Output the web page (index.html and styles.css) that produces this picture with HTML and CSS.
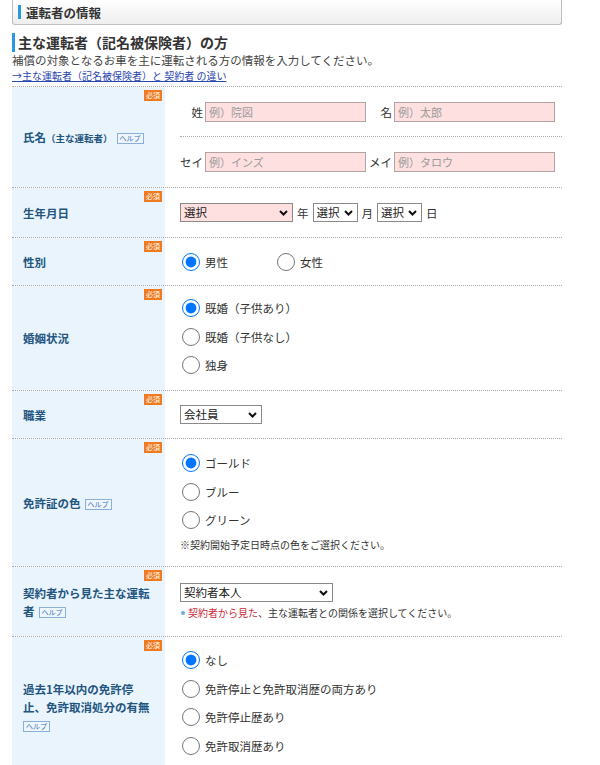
FILE: index.html
```html
<!DOCTYPE html>
<html lang="ja">
<head>
<meta charset="utf-8">
<title>運転者の情報</title>
<link rel="stylesheet" href="styles.css">
</head>
<body>
<div class="page">
  <div class="sec-head"><span class="sec-bar"></span>運転者の情報</div>
  <h2 class="sub-head">主な運転者（記名被保険者）の方</h2>
  <p class="desc">補償の対象となるお車を主に運転される方の情報を入力してください。</p>
  <a class="diff-link" href="#">→主な運転者（記名被保険者）と 契約者 の違い</a>

  <div class="form">
    <div class="row row-name">
      <div class="lbl"><div class="lt">氏名<span class="small">（主な運転者）</span><span class="help">ヘルプ</span></div><span class="req">必須</span></div>
      <div class="val val-name">
        <div class="name-line line-top">
          <span class="nl">姓</span><input class="txt" type="text" placeholder="例）院図">
          <span class="nl nl2">名</span><input class="txt" type="text" placeholder="例）太郎">
        </div>
        <div class="name-line">
          <span class="nl">セイ</span><input class="txt" type="text" placeholder="例）インズ">
          <span class="nl nl2">メイ</span><input class="txt" type="text" placeholder="例）タロウ">
        </div>
      </div>
    </div>

    <div class="row row-birth">
      <div class="lbl"><div class="lt">生年月日</div><span class="req">必須</span></div>
      <div class="val val-inline">
        <span class="sw"><select class="sel sel-year pink"><option>選択</option></select><svg class="chev" viewBox="0 0 9 6"><path d="M1 1L4.5 4.5L8 1"/></svg></span><span class="unit">年</span>
        <span class="sw"><select class="sel sel-md"><option>選択</option></select><svg class="chev" viewBox="0 0 9 6"><path d="M1 1L4.5 4.5L8 1"/></svg></span><span class="unit">月</span>
        <span class="sw"><select class="sel sel-md"><option>選択</option></select><svg class="chev" viewBox="0 0 9 6"><path d="M1 1L4.5 4.5L8 1"/></svg></span><span class="unit">日</span>
      </div>
    </div>

    <div class="row row-gender">
      <div class="lbl"><div class="lt">性別</div><span class="req">必須</span></div>
      <div class="val val-inline">
        <label class="opt opt-inline"><input type="radio" name="g" checked><span class="ot">男性</span></label>
        <label class="opt opt-inline"><input type="radio" name="g"><span class="ot">女性</span></label>
      </div>
    </div>

    <div class="row row-marital">
      <div class="lbl"><div class="lt">婚姻状況</div><span class="req">必須</span></div>
      <div class="val val-radios pt8">
        <label class="opt"><input type="radio" name="m" checked><span class="ot">既婚（子供あり）</span></label>
        <label class="opt"><input type="radio" name="m"><span class="ot">既婚（子供なし）</span></label>
        <label class="opt"><input type="radio" name="m"><span class="ot">独身</span></label>
      </div>
    </div>

    <div class="row row-job">
      <div class="lbl"><div class="lt">職業</div><span class="req">必須</span></div>
      <div class="val val-inline">
        <span class="sw"><select class="sel sel-job"><option>会社員</option></select><svg class="chev" viewBox="0 0 9 6"><path d="M1 1L4.5 4.5L8 1"/></svg></span>
      </div>
    </div>

    <div class="row row-license">
      <div class="lbl"><div class="lt">免許証の色<span class="help">ヘルプ</span></div><span class="req">必須</span></div>
      <div class="val val-radios pt10">
        <label class="opt"><input type="radio" name="c" checked><span class="ot">ゴールド</span></label>
        <label class="opt"><input type="radio" name="c"><span class="ot">ブルー</span></label>
        <label class="opt"><input type="radio" name="c"><span class="ot">グリーン</span></label>
        <p class="note">※契約開始予定日時点の色をご選択ください。</p>
      </div>
    </div>

    <div class="row row-rel">
      <div class="lbl"><div class="lt"><span>契約者から見た主な運転</span><span class="nw">者<span class="help">ヘルプ</span></span></div><span class="req">必須</span></div>
      <div class="val">
        <span class="sw"><select class="sel sel-rel"><option>契約者本人</option></select><svg class="chev" viewBox="0 0 9 6"><path d="M1 1L4.5 4.5L8 1"/></svg></span>
        <p class="rel-note"><span class="dot"></span><span class="red">契約者から見た</span>、主な運転者との関係を選択してください。</p>
      </div>
    </div>

    <div class="row row-past">
      <div class="lbl"><div class="lt">過去1年以内の免許停止、免許取消処分の有無<br><span class="help help-block">ヘルプ</span></div><span class="req">必須</span></div>
      <div class="val val-radios pt9">
        <label class="opt"><input type="radio" name="p" checked><span class="ot">なし</span></label>
        <label class="opt"><input type="radio" name="p"><span class="ot">免許停止と免許取消歴の両方あり</span></label>
        <label class="opt"><input type="radio" name="p"><span class="ot">免許停止歴あり</span></label>
        <label class="opt"><input type="radio" name="p"><span class="ot">免許取消歴あり</span></label>
      </div>
    </div>
  </div>
</div>
</body>
</html>
```

FILE: styles.css
```css
* { box-sizing: border-box; }
html, body { margin: 0; padding: 0; background: #fff; }
body {
  font-family: "Noto Sans CJK JP", "Noto Sans", sans-serif;
  color: #333;
}
.page {
  width: 562px;
  padding-left: 12px;
}
.sec-head {
  height: 25px;
  display: flex;
  align-items: center;
  border: 1px solid #bdbdbd;
  border-top: none;
  border-radius: 0 0 3px 3px;
  background: linear-gradient(#ffffff, #eeeeee);
  padding-left: 5px;
  font-size: 12.5px;
  font-weight: bold;
  color: #333;
}
.sec-bar {
  display: inline-block;
  width: 3px;
  height: 14px;
  background: #2a98dc;
  margin-right: 5px;
}
.sub-head {
  margin: 8px 0 0;
  height: 19px;
  line-height: 18px;
  font-size: 14px;
  font-weight: bold;
  color: #333;
  border-left: 3px solid #2a98dc;
  padding-left: 3px;
}
.desc {
  margin: 0;
  font-size: 11.5px;
  line-height: 16px;
  color: #444;
}
.diff-link {
  display: block;
  font-size: 10px;
  line-height: 15px;
  color: #2a46b0;
  text-decoration: underline;
}
.form {
  margin-top: 3px;
  border-top: 1px dotted #a8a8a8;
}
.row {
  display: flex;
  border-bottom: 1px dotted #a8a8a8;
}
.lbl {
  position: relative;
  width: 153px;
  flex: none;
  background: #eaf4fc;
  padding: 0 11px 0 11px;
  display: flex;
  align-items: center;
}
.lt {
  font-size: 11.5px;
  font-weight: bold;
  line-height: 18px;
  color: #22557f;
}
.nw { white-space: nowrap; }
.small { font-size: 9.5px; }
.help {
  display: inline-block;
  margin-left: 4px;
  padding: 0 2px;
  border: 1px solid #8ab0d8;
  background: #eef5fc;
  color: #3c74b8;
  font-size: 7px;
  line-height: 9px;
  font-weight: normal;
  vertical-align: middle;
}
.help-block { margin-left: 0; }
.req {
  position: absolute;
  top: 3px;
  right: 3px;
  width: 18px;
  height: 11px;
  background: #ef7a1f;
  color: #fff;
  font-size: 7px;
  line-height: 11px;
  text-align: center;
}
.val {
  flex: 1;
  padding-left: 15px;
  display: flex;
  flex-direction: column;
  justify-content: center;
  align-items: flex-start;
  font-size: 11.5px;
}
.val-inline {
  flex-direction: row;
  justify-content: flex-start;
  align-items: center;
}
.val-radios { justify-content: flex-start; }
.pt8 { padding-top: 8px; }
.pt9 { padding-top: 9px; }
.pt10 { padding-top: 10px; }

.row-name { min-height: 101px; }
.val-name { padding-left: 15px; justify-content: flex-start; align-items: stretch; }
.name-line {
  height: 50px;
  display: flex;
  align-items: center;
}
.line-top { height: 50px; border-bottom: 1px dotted #a8a8a8; }
.nl {
  width: 23px;
  text-align: right;
  margin-right: 2px;
  font-size: 11.5px;
  color: #333;
}
.nl2 { width: 26px; }
.txt {
  width: 161px;
  height: 20px;
  margin: 0;
  padding: 0 3px;
  border: 1px solid #b3a3a3;
  background: #ffe0e1;
  font-family: "Noto Sans CJK JP", sans-serif;
  font-size: 11px;
  color: #333;
}
.txt::placeholder { color: #9a9a9a; }

.row-birth { min-height: 50px; }
.row-gender { min-height: 48px; }
.row-marital { min-height: 105px; }
.row-job { min-height: 48px; }
.row-license { min-height: 128px; }
.row-rel { min-height: 70px; }
.row-past { min-height: 140px; }

.sw {
  position: relative;
  display: inline-block;
  height: 19px;
}
.sel {
  -webkit-appearance: none;
  appearance: none;
  display: block;
  height: 19px;
  margin: 0;
  padding: 0 0 0 3px;
  border: 1px solid #8a8a8a;
  border-radius: 0;
  background-color: #fff;
  font-family: "Noto Sans CJK JP", sans-serif;
  font-size: 11.5px;
  line-height: 17px;
  color: #222;
}
.chev {
  position: absolute;
  right: 5px;
  top: 7px;
  width: 9px;
  height: 6px;
  pointer-events: none;
}
.chev path {
  fill: none;
  stroke: #111;
  stroke-width: 2;
}
.pink { background-color: #ffe0e1; }
.sel-year { width: 113px; }
.sel-md { width: 45px; }
.sel-job { width: 82px; }
.sel-rel { width: 153px; }
.unit { margin: 0 4px; font-size: 11.5px; }

.opt {
  display: flex;
  align-items: center;
  height: 28.5px;
  color: #333;
}
.opt input {
  width: 18px;
  height: 18px;
  margin: 0 0 0 2px;
  flex: none;
}
.ot { margin-left: 5px; font-size: 11.5px; }
.opt-inline { margin-right: 47px; }

.note {
  margin: 2.5px 0 0;
  font-size: 10px;
  line-height: 16px;
  color: #333;
}
.rel-note {
  display: flex;
  align-items: center;
  margin: 3px 0 0;
  font-size: 10px;
  line-height: 16px;
  color: #333;
}
.dot {
  display: inline-block;
  width: 4px;
  height: 4px;
  border-radius: 50%;
  background: #7aa8dc;
  margin: 0 3px 0 1px;
}
.red { color: #cc2a3a; }
```
